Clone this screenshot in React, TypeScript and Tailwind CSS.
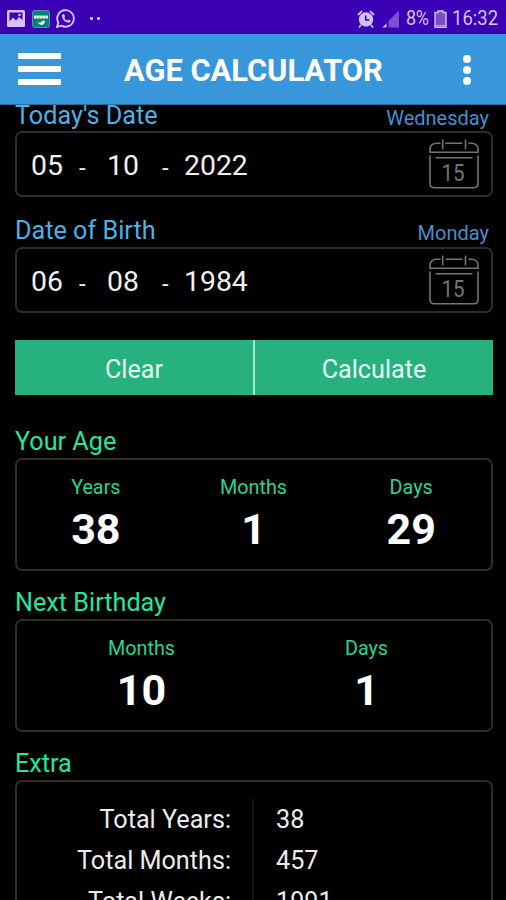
import { useState } from "react";
import type { ReactNode } from "react";

interface DateFieldProps {
  label: string;
  weekday: string;
  parts: [string, string, string];
  lowered?: boolean;
}

interface Stat {
  label: string;
  value: string;
}

const age: Stat[] = [
  { label: "Years", value: "38" },
  { label: "Months", value: "1" },
  { label: "Days", value: "29" },
];

const nextBirthday: Stat[] = [
  { label: "Months", value: "10" },
  { label: "Days", value: "1" },
];

const extra: Stat[] = [
  { label: "Total Years:", value: "38" },
  { label: "Total Months:", value: "457" },
  { label: "Total Weeks:", value: "1991" },
];

function CalendarIcon() {
  return (
    <svg width="50" height="50" viewBox="0 0 50 50" fill="none" stroke="#747474" strokeWidth="1.6">
      <path d="M11.500 4.300H7Q1 5 1 10.500V13.200H49V10.500Q49 5 43 4.300H39.500M16.500 4.300H33.500" />
      <path d="M13.700 0.500V10.500M36.500 0.500V10.500" />
      <path d="M1 16.500V44.500Q1 48.800 5.500 48.800H44.500Q49 48.800 49 44.500V16.500" />
      <path d="M6.500 18.800H43.500" />
      <text
        x="24"
        y="42"
        textAnchor="middle"
        fontSize="24"
        fontFamily="Roboto, sans-serif"
        textLength="23"
        lengthAdjust="spacingAndGlyphs"
        fill="#747474"
        stroke="none"
      >
        15
      </text>
    </svg>
  );
}

function StatusBar() {
  return (
    <div className="flex h-[34px] shrink-0 items-center bg-[#3b00b3] pt-[3px] pr-[7px] pl-[7px] text-[#d3c3f2]">
      {/* Notifications */}
      <svg width="18" height="17" viewBox="0 0 18 17">
        <rect x="0" y="0" width="18" height="17" rx="1.500" fill="#d3c3f2" />
        <path d="M2.500 2.500H15.500V10L12 7L9 10.500L6 7.500L2.500 11.500Z" fill="#3b00b3" />
        <circle cx="12.500" cy="5" r="1.300" fill="#d3c3f2" />
      </svg>
      <svg className="ml-[7px]" width="18" height="18" viewBox="0 0 18 18">
        <rect x="0.500" y="0.500" width="17" height="17" rx="2" fill="#087f7b" stroke="#5f8fa8" />
        <path d="M2 7H16" stroke="#e8f5e0" strokeWidth="3" strokeDasharray="2.600 0.250" />
        <path d="M5.500 12Q8.500 13.500 9.500 11.500Q10.500 10.500 13 10.500Q12.500 15 9.500 15Q6.500 14.500 5.500 12Z" fill="#e8f5e0" />
      </svg>
      <svg className="ml-[6px]" width="20" height="19" viewBox="0 0 20 19" fill="none" stroke="#d3c3f2" strokeWidth="1.900">
        <path d="M1 18L2.300 13.500A8.300 8.300 0 1 1 5.500 16.700Z" />
        <path
          d="M6.800 5.200L8 5L9.200 7.500L8.200 8.800Q9.200 10.800 11.300 11.700L12.500 10.400L14.800 11.600Q14.500 13.800 12.400 13.800Q6.500 12.500 6 7Q6 5.700 6.800 5.200Z"
          fill="#d3c3f2"
          stroke="none"
        />
      </svg>
      <svg className="ml-[14px]" width="12" height="4" viewBox="0 0 12 4" fill="#d3c3f2">
        <rect x="0" y="0" width="3" height="3" rx="1" />
        <rect x="7" y="0" width="3" height="3" rx="1" />
      </svg>

      {/* System */}
      <svg className="ml-auto" width="18" height="18" viewBox="0 0 18 18">
        <circle cx="9" cy="9.500" r="7.200" fill="#d3c3f2" />
        <path d="M1 5L5 1.200M17 5L13 1.200M4 15L2 17.500M14 15L16 17.500" stroke="#d3c3f2" strokeWidth="1.800" />
        <path d="M8.700 5.500V10H12.300" fill="none" stroke="#3b00b3" strokeWidth="1.500" />
      </svg>
      <svg className="ml-[7px]" width="18" height="18" viewBox="0 0 18 18">
        <path d="M6.500 17.500V11L17 0.500V17.500Z" fill="#7d50cf" />
        <path d="M0.500 17.500L4.500 13.200V17.500Z" fill="#d3c3f2" />
      </svg>
      <span className="ml-[6px] w-[23px] text-[21px] leading-none tracking-[-0.5px]">
        <span className="inline-block origin-left scale-x-[0.86]">8%</span>
      </span>
      <svg className="ml-[5px]" width="13" height="18" viewBox="0 0 13 18">
        <path d="M4 1H9V2.500H12V17.500H1V2.500H4Z" fill="#7b4fc4" stroke="#d3c3f2" strokeWidth="1.400" />
        <path d="M2 15.700H11" stroke="#e08aa8" strokeWidth="1.500" />
      </svg>
      <span className="ml-[5px] w-[47px] text-[21px] leading-none">
        <span className="inline-block origin-left scale-x-[0.88]">16:32</span>
      </span>
    </div>
  );
}

function Header() {
  return (
    <header className="flex h-[71px] shrink-0 items-center border-b border-[#2b6c9e] bg-[#3897db] pr-[35px] pl-[18px]">
      <button className="flex w-[43px] flex-col gap-[7px]" aria-label="Menu">
        <span className="h-[6px] rounded-[1px] bg-white" />
        <span className="h-[6px] rounded-[1px] bg-white" />
        <span className="h-[6px] rounded-[1px] bg-white" />
      </button>
      <h1 className="ml-[63px] pt-[5px] text-[30.8px] leading-none font-bold text-white">AGE CALCULATOR</h1>
      <button className="ml-auto flex flex-col gap-[3px] pt-px" aria-label="More">
        <span className="size-[8px] rounded-full bg-white" />
        <span className="size-[8px] rounded-full bg-white" />
        <span className="size-[8px] rounded-full bg-white" />
      </button>
    </header>
  );
}

function DateField({ label, weekday, parts, lowered = false }: DateFieldProps) {
  const [day, month, year] = parts;
  return (
    <section>
      <div className={`flex h-8 justify-between pr-1 ${lowered ? "pt-px" : ""}`}>
        <h2 className="text-[25.2px] leading-[32px] text-[#4db1e6]">{label}</h2>
        <span className="pt-[4px] text-[20px] leading-[28px] text-[#4590cd]">{weekday}</span>
      </div>
      <div className="flex h-[66px] items-center rounded-[7px] border-2 border-[#2c2c2c] pr-[12px] pl-[14px] text-[28.4px] text-[#f0f0f0]">
        <span className="w-[48px] pt-[4px]">{day}</span>
        <span className="w-[28px] pt-[8px] text-[24px]">-</span>
        <span className="w-[55px] pt-[4px]">{month}</span>
        <span className="w-[22px] pt-[8px] text-[24px]">-</span>
        <span className="pt-[4px]">{year}</span>
        <button className="ml-auto" aria-label="Pick date">
          <CalendarIcon />
        </button>
      </div>
    </section>
  );
}

function Panel({ title, children }: { title: string; children: ReactNode }) {
  return (
    <section>
      <h2 className="h-8 text-[25.2px] leading-[32px] text-[#25e6a0]">{title}</h2>
      {children}
    </section>
  );
}

function StatRow({ stats, inset = false }: { stats: Stat[]; inset?: boolean }) {
  return (
    <div
      className={`flex h-[113px] rounded-[7px] border-2 border-[#2c2c2c] pt-[14px] ${inset ? "px-[12px]" : "pr-px"}`}
    >
      {stats.map((s) => (
        <div key={s.label} className="flex flex-1 flex-col items-center">
          <span className="text-[19.8px] leading-7 text-[#27d596]">{s.label}</span>
          <span className="text-[43px] leading-[54px] font-bold text-white">{s.value}</span>
        </div>
      ))}
    </div>
  );
}

export default function App() {
  const [result, setResult] = useState(true);

  return (
    <div className="flex h-[900px] w-[506px] flex-col overflow-hidden bg-black font-['Roboto',sans-serif]">
      <StatusBar />
      <Header />
      <main className="min-h-0 flex-1 overflow-hidden">
        <div className="-mt-[6px] flex flex-col pr-[13px] pl-[15px]">
          <div className="flex flex-col gap-[18px]">
            <DateField label="Today's Date" weekday="Wednesday" parts={["05", "10", "2022"]} lowered />
            <DateField label="Date of Birth" weekday="Monday" parts={["06", "08", "1984"]} />
          </div>

          <div className="mt-[27px] flex h-[55px] text-[25.200px] text-[#e4fff4]">
            <button className="flex-1 border-r-2 border-[#a5e6cb] bg-[#26b17f] pt-[4px]" onClick={() => setResult(false)}>
              Clear
            </button>
            <button className="flex-1 bg-[#26b17f] pt-[4px]" onClick={() => setResult(true)}>
              Calculate
            </button>
          </div>

          {result && (
            <div className="mt-[31px] flex flex-col gap-4">
              <Panel title="Your Age">
                <StatRow stats={age} />
              </Panel>
              <Panel title="Next Birthday">
                <StatRow stats={nextBirthday} inset />
              </Panel>
              <Panel title="Extra">
                <div className="flex h-[240px] rounded-[7px] border-2 border-[#2c2c2c] pt-[17px] text-[25.200px] leading-[41px] text-[#ececec]">
                  <div className="w-1/2 border-r-2 border-[#141414] pr-[21px] text-right">
                    {extra.map((s) => (
                      <p key={s.label}>{s.label}</p>
                    ))}
                  </div>
                  <div className="w-1/2 pl-[22px]">
                    {extra.map((s) => (
                      <p key={s.label}>{s.value}</p>
                    ))}
                  </div>
                </div>
              </Panel>
            </div>
          )}
        </div>
      </main>
    </div>
  );
}
